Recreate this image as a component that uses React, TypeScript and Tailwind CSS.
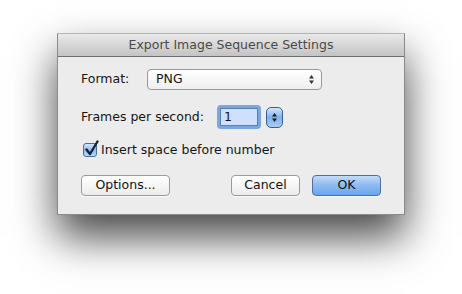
import React from "react";

const font = { fontFamily: '"DejaVu Sans", "Liberation Sans", sans-serif' };

function Button({ label, primary, width }: { label: string; primary?: boolean; width: string }) {
  return (
    <button
      className={`${width} h-[21px] rounded-[4px] border text-[12.5px] leading-none flex items-center justify-center ${
        primary
          ? "border-[#50709e] bg-gradient-to-b from-[#c3dcf8] via-[#8cbaf0] to-[#6aa6ee] text-[#111]"
          : "border-[#9a9a9a] bg-gradient-to-b from-white to-[#ececec] text-[#111]"
      } shadow-[0_1px_0_rgba(255,255,255,0.8)]`}
    >
      {label}
    </button>
  );
}

export default function App() {
  return (
    <div className="w-[462px] h-[294px] bg-white pt-[33px] pl-[57px]" style={font}>
      <div className="w-[348px] h-[182px] bg-[#ececec] border border-[#8a8a8a] border-t-[#b5b5b5] shadow-[0_22px_40px_rgba(0,0,0,0.72)] flex flex-col">
        <div className="h-[23px] shrink-0 bg-gradient-to-b from-[#e9e9e9] to-[#c4c4c4] border-b border-[#6f6f6f] flex items-center justify-center text-[12.5px] text-[#4a4a4a]">
          Export Image Sequence Settings
        </div>

        <div className="flex flex-col pl-[23px] pr-[23px] text-[12.5px] text-[#151515]">
          <div className="mt-[12px] h-[21px] flex items-center">
            <span className="w-[66px]">Format:</span>
            <div className="w-[175px] h-[21px] rounded-[4px] border border-[#9a9a9a] bg-gradient-to-b from-white to-[#efefef] flex items-center pl-[8px] pr-[6px]">
              <span className="flex-1">PNG</span>
              <svg width="7" height="11" viewBox="0 0 7 11">
                <path d="M3.5 1 L6 4.5 L1 4.5 Z" fill="#333" />
                <path d="M3.5 10 L6 6.5 L1 6.5 Z" fill="#333" />
              </svg>
            </div>
          </div>

          <div className="mt-[15px] h-[24px] flex items-center">
            <span className="w-[136px]">Frames per second:</span>
            <div className="w-[44px] h-[24px] rounded-[4px] bg-[#7aa6e2] p-[3px]">
              <div className="w-full h-full bg-[#cfe0fb] border border-[#5b7fb5] flex items-center pl-[3px] leading-none">
                1
              </div>
            </div>
            <div className="ml-[5px] w-[17px] h-[21px] rounded-[5px] border border-[#3d5f92] bg-gradient-to-b from-[#d4e6fb] via-[#7eb1ee] to-[#a9cdf5] flex items-center justify-center">
              <svg width="7" height="11" viewBox="0 0 7 11">
                <path d="M3.5 1 L6 4.5 L1 4.5 Z" fill="#1a1a1a" />
                <path d="M3.5 10 L6 6.5 L1 6.5 Z" fill="#1a1a1a" />
              </svg>
            </div>
          </div>

          <div className="mt-[14px] h-[14px] flex items-center">
            <div className="ml-[2px] relative w-[14px] h-[14px] rounded-[3px] border border-[#4e6f9e] bg-gradient-to-b from-[#d2e5fb] via-[#8fbcf0] to-[#b9d7f7]">
              <svg className="absolute -top-[4px] left-[0px]" width="16" height="17" viewBox="0 0 16 17">
                <path d="M2.5 9.5 L6 14 L13.5 1.5" fill="none" stroke="#152238" strokeWidth="2.4" strokeLinecap="round" strokeLinejoin="round" />
              </svg>
            </div>
            <span className="ml-[4px]">Insert space before number</span>
          </div>

          <div className="mt-[18px] flex items-center">
            <Button label="Options..." width="w-[89px]" />
            <div className="flex-1" />
            <Button label="Cancel" width="w-[69px]" />
            <div className="ml-[12px]">
              <Button label="OK" primary width="w-[69px]" />
            </div>
          </div>
        </div>
      </div>
    </div>
  );
}
